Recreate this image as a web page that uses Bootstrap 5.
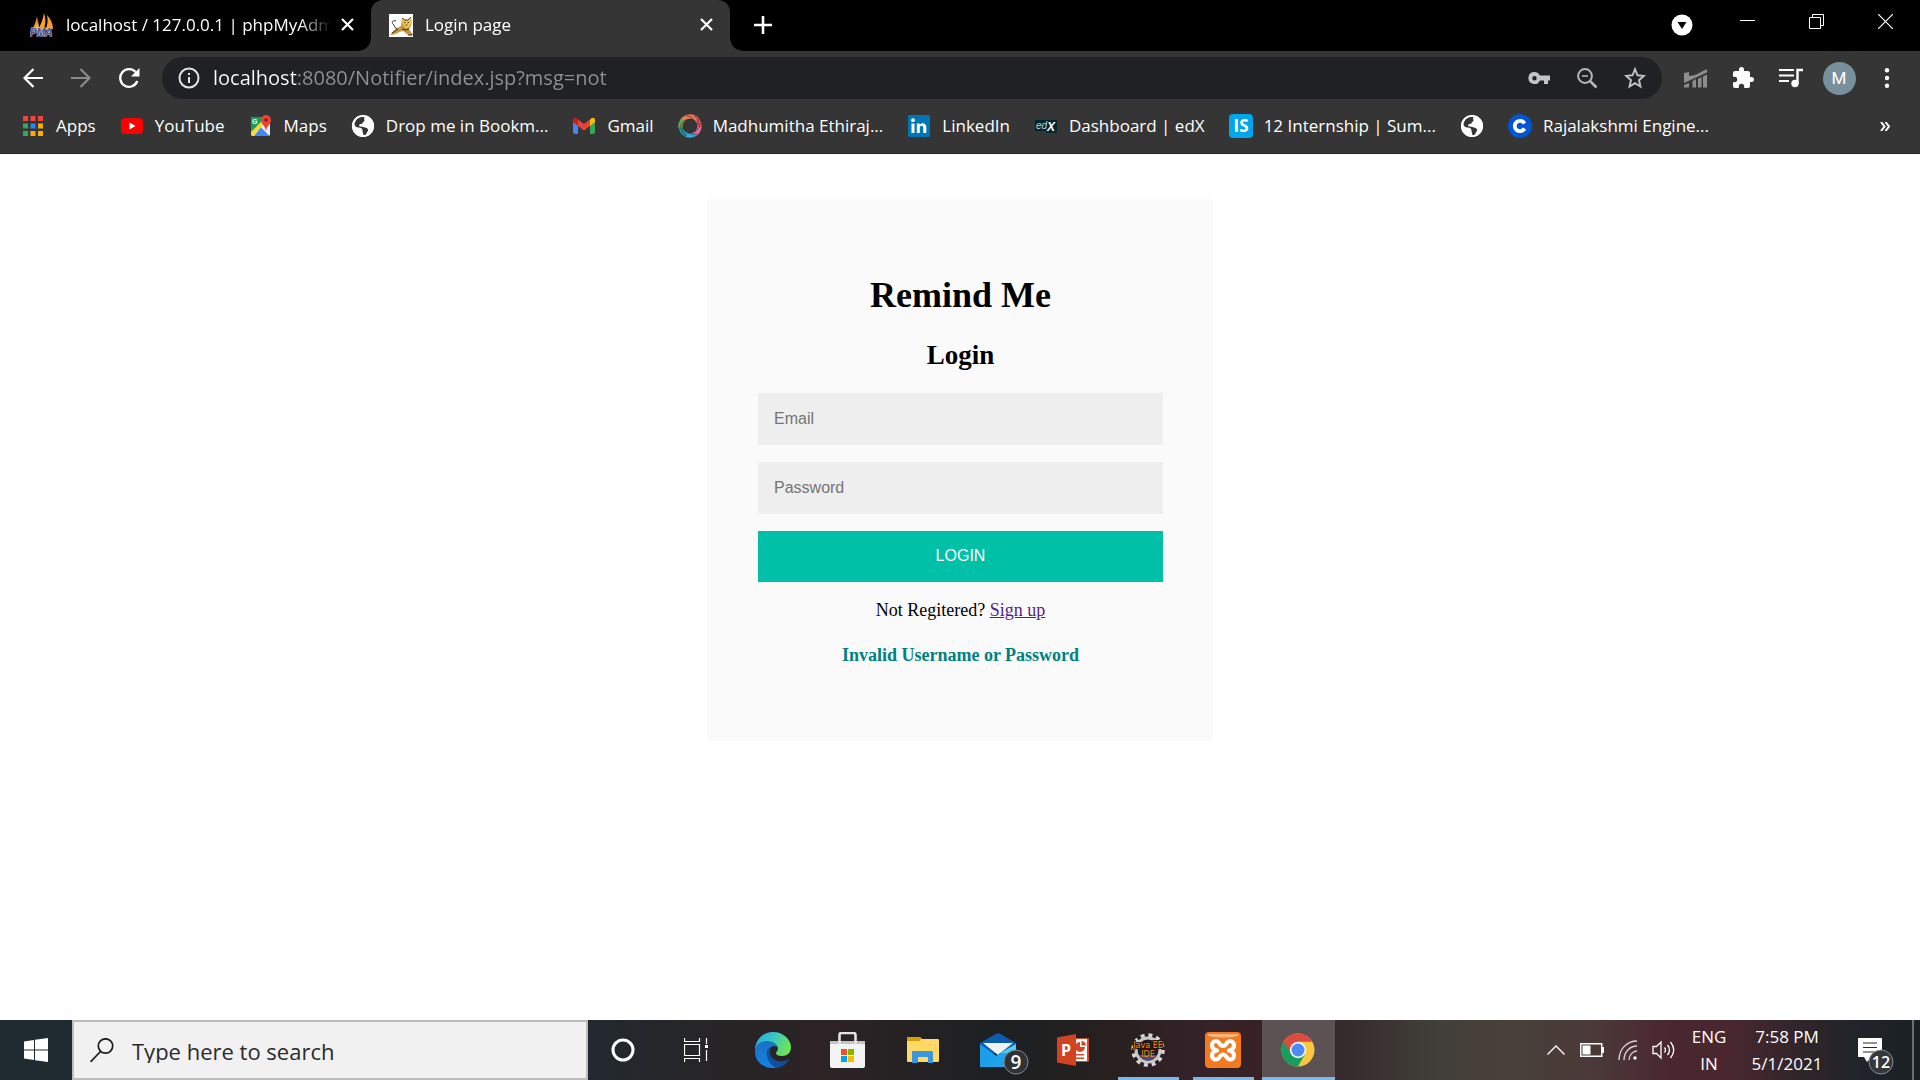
<!DOCTYPE html>
<html lang="en">
<head>
<meta charset="utf-8">
<meta name="viewport" content="width=device-width, initial-scale=1">
<title>Login page</title>
<link href="https://cdn.jsdelivr.net/npm/bootstrap@5.3.0/dist/css/bootstrap.min.css" rel="stylesheet">
<style>
  body { font-family: "Open Sans", "Noto Sans", sans-serif; font-size: 17px; line-height: 24px; background: #fff; }
  button { background: none; border: 0; padding: 0; color: inherit; }
  svg { display: block; flex: none; }

  /* tab strip */
  .tab-strip { background: #000; color: #fff; height: 51px; padding-left: 12px; }
  .browser-tab { flex: 0 1 359px; min-width: 0; padding: 0 12px 2px 18px; position: relative; }
  .browser-tab.current { background: #353535; border-radius: 12px 12px 0 0; }
  .browser-tab.current::before, .browser-tab.current::after { content: ""; position: absolute; bottom: 0; width: 12px; height: 12px; }
  .browser-tab.current::before { right: 100%; background: radial-gradient(circle at 0 0, #000 11px, #353535 12px); }
  .browser-tab.current::after { left: 100%; background: radial-gradient(circle at 100% 0, #000 11px, #353535 12px); }
  .tab-title { margin: 0 5px 0 12px; overflow: hidden; white-space: nowrap; -webkit-mask-image: linear-gradient(90deg, #000 calc(100% - 32px), transparent); mask-image: linear-gradient(90deg, #000 calc(100% - 32px), transparent); }
  .tab-close { width: 24px; height: 24px; }
  .new-tab { width: 36px; margin-left: 15px; padding-bottom: 2px; }
  .win-btn { width: 69px; height: 42px; }
  .tab-search { width: 63px; height: 51px; padding-bottom: 2px; }

  /* toolbar */
  .tool-row { background: #353535; color: #fff; height: 54px; padding: 0 9px; }
  .tool-btn { width: 48px; height: 42px; }
  .omnibox { background: #202125; border-radius: 21px; height: 42px; margin: 0 9px; padding: 0 3px 0 15px; gap: 12px; color: #bdbec0; }
  .omnibox .tool-btn { margin-left: -12px; }
  .omnibox .tool-group { gap: 12px; padding-left: 12px; }
  .url-field { border: 0; outline: 0; padding: 0; min-width: 0; height: 36px; font-size: 20px; line-height: 36px; color: transparent; caret-color: #fff;
    background: linear-gradient(90deg, #fff 84px, #8f9296 84px); -webkit-background-clip: text; background-clip: text; }
  .avatar { width: 33px; height: 33px; border-radius: 50%; background: #78909c; font-family: Roboto, sans-serif; font-size: 17px; }

  /* bookmarks */
  .mark-row { background: #353535; height: 49px; padding: 0 11px 6px 21px; gap: 24px; border-bottom: 1px solid #232323; }
  .mark-row a { color: #fff; text-decoration: none; gap: 11px; white-space: nowrap; }
  .more-marks { width: 48px; color: #fff; }

  /* login card */
  .login-card { width: 100%; max-width: 506px; margin-top: 45px; padding: 76px 50px 76px 51px; background: #fafafa; color: #000; font-family: "Liberation Serif", serif; font-size: 18px; line-height: 20px; }
  .login-card h1 { font-size: 36px; line-height: 40px; font-weight: 700; margin: 0 0 25px; }
  .login-card h2 { font-size: 27px; line-height: 30px; font-weight: 700; margin: 0 0 23px; }
  .login-card .form-control, .login-card .btn { font-family: "Liberation Sans", sans-serif; font-size: 16px; line-height: 20px; border: 0; border-radius: 0; }
  .login-card .form-control { background: #eee; padding: 16px; margin-bottom: 17px; }
  .login-card .form-control::placeholder { color: #757575; }
  .login-card .btn { background: #00c0a7; color: #fff; padding: 15px 16px 16px; }
  .login-card p { margin: 18px 0 25px; }
  .login-card a { color: #551a8b; }
  .login-card .alert-line { color: #008080; margin-bottom: 0; }

  /* task bar */
  .task-row { height: 60px; color: #fff; background: linear-gradient(90deg, #1f2b31 0, #23292e 31%, #272426 38%, #2c2325 43%, #1d2022 52%, #27201f 58%, #36222a 63%, #382123 66%, #352b2c 70%, #42403a 75%, #494039 79%, #4b3939 83%, #4a2730 87%, #4a272f 90%, #2e2529 94%, #20242a 97%, #1b2023 100%); }
  .start-btn { width: 72px; }
  .search-box { flex: 0 1 516px; min-width: 0; background: #f1f1f1; border: 2px solid #bebebe; padding-left: 16px; gap: 18px; }
  .search-box input { border: 0; outline: 0; background: none; padding: 2px 0 0; min-width: 0; font-size: 22px; color: #2b2b2b; }
  .search-box input::placeholder { color: #2b2b2b; opacity: 1; }
  .task-btn { width: 75px; border-bottom: 3px solid transparent; padding: 3px 2px 0 0; }
  .task-group { margin-left: -2px; }
  .task-btn.running { border-image: linear-gradient(90deg, transparent 7px, #76b9ed 7px, #76b9ed 68px, transparent 68px) 0 0 3; }
  .task-btn.focused { width: 73px; margin: 0 1px; background: #5c5253; border-bottom-color: #76b9ed; }
  .tray-btn { width: 36px; }
  .tray-text { font-size: 17px; line-height: 27px; text-align: center; }
  .lang-btn { width: 54px; }
  .clock-btn { width: 102px; }
  .note-btn { width: 74px; padding-left: 20px; }
  .desk-btn { width: 8px; border-left: 2px solid #6d7073; }
</style>
<script src="https://cdn.jsdelivr.net/npm/bootstrap@5.3.0/dist/js/bootstrap.bundle.min.js"></script>
</head>
<body class="d-flex flex-column min-vh-100">
<header>
  <div class="tab-strip d-flex">
    <div class="browser-tab d-flex align-items-center">
      <svg width="24" height="24" viewBox="0 0 24 24"><path d="M7 3C6 9 4 14 1 18l6-1zM14 0c2 6 2 12-1 17l-6 1C11 12 13 6 14 0zM17 2c4 4 6 9 6 14l-8 1c3-5 3-10 2-15z" fill="#f89c2b"/><path d="M7 3c1 5 0 10-1 14l3-1c0-4-1-9-2-13z" fill="#e9b36f"/><text x="0" y="23" font-family="Liberation Sans" font-size="10" font-weight="700" font-style="italic" fill="#4f4f91" stroke="#c8c8dc" stroke-width="1" paint-order="stroke">PMA</text></svg>
      <span class="tab-title flex-grow-1">localhost / 127.0.0.1 | phpMyAdmin</span>
      <button class="tab-close d-flex align-items-center justify-content-center" aria-label="Close tab"><svg width="13" height="13" viewBox="0 0 13 13"><path d="M1 1l11 11M12 1L1 12" stroke="#fff" stroke-width="2.2"/></svg></button>
    </div>
    <div class="browser-tab current d-flex align-items-center">
      <svg width="24" height="24" viewBox="0 0 24 24"><path d="M0 1h24v23H0z" fill="#fff"/><path d="M1 22C4 18 7 15 12 13l1-8 3 2h3l3-3c1 5 1 9-2 12l4 6h-5l-5-4c-4 0-6 4-13 4z" fill="#c9963a"/><path d="M13 5l3 3h3l3-4c1 5 0 8-2 10l-3 1c-3-2-4-5-4-10z" fill="#e9c65a"/><path d="M15 9l1.500 1M20 9l-1.500 1M16.500 12h2M13 5l3 2h3l3-3" fill="none" stroke="#6b4a16" stroke-width="1"/><path d="M3 20l6-4M8 16c-3-1-2-4-4-5-2-2 0-4 3-3M13 16l4 1 3-1M19 22h4v-1" fill="none" stroke="#333" stroke-width="1"/></svg>
      <span class="tab-title flex-grow-1">Login page</span>
      <button class="tab-close d-flex align-items-center justify-content-center" aria-label="Close tab"><svg width="13" height="13" viewBox="0 0 13 13"><path d="M1 1l11 11M12 1L1 12" stroke="#fff" stroke-width="2.2"/></svg></button>
    </div>
    <button class="new-tab d-flex align-items-center justify-content-center" aria-label="New tab"><svg width="18" height="18" viewBox="0 0 18 18"><path d="M9 0v18M0 9h18" stroke="#fff" stroke-width="2.6"/></svg></button>
    <div class="d-flex ms-auto">
      <button class="tab-search d-flex align-items-center justify-content-center" aria-label="Search tabs"><svg width="22" height="22" viewBox="0 0 22 22"><circle cx="11" cy="11" r="10.5" fill="#fff"/><path d="M6.500 8h9L11 15z" fill="#000"/></svg></button>
      <button class="win-btn d-flex align-items-center justify-content-center" aria-label="Minimize"><svg width="15" height="15" viewBox="0 0 15 15"><path d="M0 6.500h15" stroke="#fff"/></svg></button>
      <button class="win-btn d-flex align-items-center justify-content-center" aria-label="Restore"><svg width="15" height="15" viewBox="0 0 15 15"><path d="M.5 3.500h11v11h-11zM3.500 3.500v-3h11v11h-3" fill="none" stroke="#fff"/></svg></button>
      <button class="win-btn d-flex align-items-center justify-content-center" aria-label="Close"><svg width="15" height="15" viewBox="0 0 15 15"><path d="M0 0l15 15M15 0L0 15" stroke="#fff" stroke-width="1.200"/></svg></button>
    </div>
  </div>

  <div class="tool-row d-flex align-items-center">
    <button class="tool-btn d-flex align-items-center justify-content-center" aria-label="Back"><svg width="20" height="20" viewBox="0 0 20 20"><path d="M20 10H2M10.500 1L1.500 10l9 9" fill="none" stroke="#fff" stroke-width="2.200"/></svg></button>
    <button class="tool-btn d-flex align-items-center justify-content-center" aria-label="Forward"><svg width="20" height="20" viewBox="0 0 20 20"><path d="M0 10h18M9.500 1l9 9-9 9" fill="none" stroke="#8b8b8b" stroke-width="2.200"/></svg></button>
    <button class="tool-btn d-flex align-items-center justify-content-center" aria-label="Reload"><svg width="22" height="20" viewBox="0 0 22 20"><path d="M19.300 13A8.800 8.800 0 1 1 17.500 4" fill="none" stroke="#fff" stroke-width="2.300"/><path d="M21.500 0v8.500H13z" fill="#fff"/></svg></button>
    <div class="omnibox flex-grow-1 d-flex align-items-center">
      <svg width="24" height="24" viewBox="0 0 24 24"><circle cx="12" cy="12" r="9.500" fill="none" stroke="#e4e5e7" stroke-width="2"/><path d="M11 7h2v2h-2zM11 11h2v6h-2z" fill="#e4e5e7"/></svg>
      <input class="url-field flex-grow-1" type="text" aria-label="Address" value="localhost:8080/Notifier/index.jsp?msg=not">
      <div class="tool-group d-flex">
        <button class="tool-btn d-flex align-items-center justify-content-center" aria-label="Passwords"><svg width="22" height="14" viewBox="0 0 22 14"><path d="M6.500 1a6 6 0 1 0 5.400 8.500H16V13h4V9.500h2v-5H11.900A6 6 0 0 0 6.500 1zm0 4a2.200 2.200 0 1 1 0 4.400 2.200 2.200 0 0 1 0-4.400z" fill="#c3c4c6"/></svg></button>
        <button class="tool-btn d-flex align-items-center justify-content-center" aria-label="Zoom"><svg width="22" height="22" viewBox="0 0 22 22"><circle cx="9" cy="9" r="6.900" fill="none" stroke="#b4b5b7" stroke-width="2"/><path d="M14 14l6.500 6.500" stroke="#b4b5b7" stroke-width="2.600"/><path d="M6 9h6" stroke="#b4b5b7" stroke-width="1.600"/></svg></button>
        <button class="tool-btn d-flex align-items-center justify-content-center" aria-label="Bookmark"><svg width="22" height="22" viewBox="0 0 22 22"><path d="M11 2.200l2.500 6.100 6.400.6-4.900 4.300 1.500 6.400L11 16.200l-5.500 3.400L7 13.200 2.100 8.900l6.400-.6z" fill="none" stroke="#c3c4c6" stroke-width="1.900"/></svg></button>
      </div>
    </div>
    <button class="tool-btn d-flex align-items-center justify-content-center" aria-label="Analytics extension"><svg width="23" height="20" viewBox="0 0 23 20"><path d="M0 17l5-2v4.500H0zM8.500 13l3.500-2v8.500H8.500zM14 11l3.500-2v10.500H14zM19 8.500l4-2v13h-4z" fill="#8d8d8d"/><path d="M0 5l5-1v4l6-1 12-6v3.500L0 15z" fill="#8d8d8d"/></svg></button>
    <button class="tool-btn d-flex align-items-center justify-content-center" aria-label="Extensions"><svg width="24" height="24" viewBox="0 0 24 24"><path d="M20.500 11H19V7a2 2 0 0 0-2-2h-4V3.500a2.500 2.500 0 0 0-5 0V5H4a2 2 0 0 0-2 2v3.800h1.500a2.700 2.700 0 0 1 0 5.400H2V20a2 2 0 0 0 2 2h3.800v-1.500a2.700 2.700 0 0 1 5.400 0V22H17a2 2 0 0 0 2-2v-4h1.500a2.500 2.500 0 0 0 0-5z" fill="#fff"/></svg></button>
    <button class="tool-btn d-flex align-items-center justify-content-center" aria-label="Media controls"><svg width="24" height="20" viewBox="0 0 24 20"><path d="M0 2h15M0 7.500h15M0 13h10" stroke="#fff" stroke-width="2.200"/><circle cx="16" cy="15.500" r="3.700" fill="#fff"/><path d="M18.500 15V2H24" fill="none" stroke="#fff" stroke-width="2.400"/></svg></button>
    <button class="tool-btn d-flex align-items-center justify-content-center" aria-label="Profile"><span class="avatar d-flex align-items-center justify-content-center">M</span></button>
    <button class="tool-btn d-flex align-items-center justify-content-center" aria-label="Menu"><svg width="6" height="20" viewBox="0 0 6 20"><g fill="#fff"><circle cx="3" cy="2.300" r="2.200"/><circle cx="3" cy="10" r="2.200"/><circle cx="3" cy="17.700" r="2.200"/></g></svg></button>
  </div>

  <nav class="mark-row d-flex align-items-center" aria-label="Bookmarks">
    <a href="#" class="d-flex align-items-center"><svg width="24" height="24" viewBox="0 0 24 24"><path d="M2 2h5v5H2zM9.500 2h5v5h-5zM17 2h5v5h-5z" fill="#f1453a"/><path d="M2 9.500h5v5H2zM2 17h5v5H2z" fill="#34a853"/><path d="M9.500 9.500h5v5h-5z" fill="#2684fc"/><path d="M17 9.500h5v5h-5zM9.500 17h5v5h-5zM17 17h5v5h-5z" fill="#fbab06"/></svg>Apps</a>
    <a href="#" class="d-flex align-items-center"><svg width="24" height="24" viewBox="0 0 24 24"><rect x="1" y="4" width="22" height="16" rx="4" fill="#f00"/><path d="M9.500 8.500v7l6-3.500z" fill="#fff"/></svg>YouTube</a>
    <a href="#" class="d-flex align-items-center"><svg width="24" height="24" viewBox="0 0 24 24"><rect x="2" y="3" width="19" height="19" rx="2" fill="#e9ebee"/><path d="M2 18V5a2 2 0 0 1 2-2h14L6 15z" fill="#1f9d57"/><path d="M2 18L16 4l3 3L4 22l-2-1z" fill="#fdd835"/><path d="M12 12l9 9V10z" fill="#e9ebee"/><path d="M12 13.500l8.500 8.500H5z" fill="#4285f4"/><text x="3" y="10" font-family="Liberation Sans" font-size="7" font-weight="700" fill="#fff">G</text><path d="M17 1a5 5 0 0 0-5 5c0 4 4 5 5 11 1-6 5-7 5-11a5 5 0 0 0-5-5z" fill="#ea4335"/><circle cx="17" cy="6" r="1.800" fill="#8d2019"/></svg>Maps</a>
    <a href="#" class="d-flex align-items-center"><svg width="24" height="24" viewBox="0 0 24 24"><circle cx="12" cy="12" r="10.800" fill="#fff"/><path d="M3.500 9.500c0 3 2 4 4.500 4 2 0 3.500 1 3.500 3s1 3.500 1 5c3 0 3-3 4-4s1-2.500-1-3.500-4-1.500-6-1.500c-1 0-2-1-1-2s3 0 3-1.500 2-1 2-2.500-1-2 0-3.500c-4-1-8 1-9 4" fill="#353535"/><circle cx="12" cy="12" r="10.200" fill="none" stroke="#fff" stroke-width="1.800"/></svg>Drop me in Bookm...</a>
    <a href="#" class="d-flex align-items-center"><svg width="24" height="24" viewBox="0 0 24 24"><path d="M1 7v11a2 2 0 0 0 2 2h3V10z" fill="#4285f4"/><path d="M18 10v10h3a2 2 0 0 0 2-2V7z" fill="#34a853"/><path d="M18 6v6l5-4V6c0-2-2-3-4-1.500z" fill="#fbbc04"/><path d="M6 5.500l6 4.500 6-4.500V12l-6 4.500L6 12z" fill="#ea4335"/><path d="M1 6v2l5 4V5.500L5 4.500C3 3 1 4 1 6z" fill="#c5221f"/></svg>Gmail</a>
    <a href="#" class="d-flex align-items-center"><svg width="24" height="24" viewBox="0 0 24 24"><g fill="none" stroke-width="4.200"><path d="M4 7a9.500 9.500 0 0 1 7-4.500" stroke="#f47b4a"/><path d="M10 2.700a9.500 9.500 0 0 1 9.500 3.500" stroke="#f2704d"/><path d="M18.600 5.200a9.500 9.500 0 0 1 2.600 9" stroke="#e84f5e"/><path d="M21.400 13a9.500 9.500 0 0 1-5 7.400" stroke="#e66a9c"/><path d="M17.200 20a9.500 9.500 0 0 1-9.500.6" stroke="#35a9dd"/><path d="M8.500 20.800A9.500 9.500 0 0 1 2.600 13" stroke="#1a95a5"/><path d="M2.500 14A9.500 9.500 0 0 1 5.500 5.500" stroke="#6aa84a"/></g><path d="M8 2c4 0 6 1 8 5M16 2c4 2 5 5 4 9M22 9c0 4-2 7-6 9M19 20c-4 1-7 0-10-3M9 22c-4-2-5-5-5-9M2 15c0-4 2-7 6-9" fill="none" stroke="#353535" stroke-width=".7"/></svg>Madhumitha Ethiraj...</a>
    <a href="#" class="d-flex align-items-center"><svg width="24" height="24" viewBox="0 0 24 24"><rect x="1" y="1" width="22" height="22" rx="1.500" fill="#0077b5"/><path d="M4.500 9.500h3V19h-3zM9.800 9.500h2.900v1.400c1.600-2.700 6.600-2.200 6.600 2.400V19h-3v-5c0-3-3.500-2.800-3.500 0v5h-3z" fill="#fff"/><circle cx="6" cy="6.200" r="1.900" fill="#fff"/></svg>LinkedIn</a>
    <a href="#" class="d-flex align-items-center"><svg width="24" height="24" viewBox="0 0 24 24"><path d="M1 6h22v13H12v-2H1z" fill="#02262b"/><text x="2" y="15" font-family="Liberation Sans" font-size="10" font-style="italic" fill="#c9d2d3">ed</text><text x="13" y="17" font-family="Liberation Sans" font-size="12" font-weight="700" font-style="italic" fill="#fff">X</text></svg>Dashboard | edX</a>
    <a href="#" class="d-flex align-items-center"><svg width="24" height="24" viewBox="0 0 24 24"><rect width="24" height="24" rx="4" fill="#00a5ec"/><text x="12" y="18" text-anchor="middle" font-family="Open Sans" font-size="17" font-weight="700" fill="#fff">IS</text></svg>12 Internship | Sum...</a>
    <a href="#" aria-label="Bookmark"><svg width="24" height="24" viewBox="0 0 24 24"><circle cx="12" cy="12" r="10.800" fill="#fff"/><path d="M3.500 9.500c0 3 2 4 4.500 4 2 0 3.500 1 3.500 3s1 3.500 1 5c3 0 3-3 4-4s1-2.500-1-3.500-4-1.500-6-1.500c-1 0-2-1-1-2s3 0 3-1.500 2-1 2-2.500-1-2 0-3.500c-4-1-8 1-9 4" fill="#353535"/><circle cx="12" cy="12" r="10.200" fill="none" stroke="#fff" stroke-width="1.800"/></svg></a>
    <a href="#" class="d-flex align-items-center"><svg width="24" height="24" viewBox="0 0 24 24"><circle cx="12" cy="12" r="12" fill="#0056d2"/><path d="M16.500 9.500A5.200 5.200 0 1 0 16.500 14.500" fill="none" stroke="#fff" stroke-width="3.800"/></svg>Rajalakshmi Engine...</a>
    <button class="more-marks ms-auto" aria-label="More bookmarks"><svg class="mx-auto" width="10" height="9" viewBox="0 0 10 9"><path d="M1 0l3.500 4.500L1 9M5.500 0L9 4.500 5.500 9" fill="none" stroke="#fff" stroke-width="2"/></svg></button>
  </nav>
</header>

<main class="flex-grow-1 d-flex justify-content-center align-items-start">
  <form class="login-card text-center" onsubmit="return false">
    <h1>Remind Me</h1>
    <h2>Login</h2>
    <input class="form-control" type="email" placeholder="Email" aria-label="Email">
    <input class="form-control" type="password" placeholder="Password" aria-label="Password">
    <button class="btn d-block w-100" type="submit">LOGIN</button>
    <p>Not Regitered? <a href="#">Sign up</a></p>
    <p class="alert-line fw-bold">Invalid Username or Password</p>
  </form>
</main>

<footer class="task-row d-flex">
  <button class="start-btn d-flex align-items-center justify-content-center" aria-label="Start"><svg width="24" height="24" viewBox="0 0 24 24"><path d="M0 3.500L10 2v9.500H0zM11 1.800L24 0v11.500H11zM0 12.500h10V22L0 20.500zM11 12.500h13V24l-13-1.800z" fill="#fff"/></svg></button>
  <label class="search-box d-flex align-items-center"><svg width="24" height="24" viewBox="0 0 24 24"><circle cx="15.500" cy="8" r="7.200" fill="none" stroke="#1c1c1c" stroke-width="1.700"/><path d="M10.500 13.500L.5 24" stroke="#1c1c1c" stroke-width="1.700"/></svg><input class="flex-grow-1" type="text" placeholder="Type here to search" aria-label="Search"></label>
  <div class="task-group d-flex">
    <button class="task-btn d-flex align-items-center justify-content-center" aria-label="Cortana"><svg width="24" height="24" viewBox="0 0 24 24"><circle cx="12" cy="12" r="10" fill="none" stroke="#fff" stroke-width="3"/></svg></button>
    <button class="task-btn d-flex align-items-center justify-content-center" aria-label="Task view"><svg width="28" height="24" viewBox="0 0 28 24"><path d="M.5 0v3.500h15V0M.5 6.500h15v11H.5zM.5 24v-3.500h15V24M22.500 0v6M22.500 12v11" fill="none" stroke="#fff" stroke-width="1.200"/><path d="M21 7h3v3h-3z" fill="#fff"/></svg></button>
    <button class="task-btn d-flex align-items-center justify-content-center" aria-label="Edge"><svg width="36" height="36" viewBox="0 0 36 36"><defs><linearGradient id="eg1" x1="0" y1="0" x2="1" y2=".4"><stop offset="0" stop-color="#1fa8e8"/><stop offset=".5" stop-color="#36c5c4"/><stop offset="1" stop-color="#6be35a"/></linearGradient><linearGradient id="eg2" x1="0" y1="0" x2="0" y2="1"><stop offset="0" stop-color="#1b6fc4"/><stop offset="1" stop-color="#1184e4"/></linearGradient></defs><path d="M0 17C1 7 8 0 18 0c11 0 18 8 18 15 0 6-4 9-9 9-4 0-6-1-6-3 0-1 2-2 2-5C21 10 8 8 0 17z" fill="url(#eg1)"/><path d="M0 18c1-6 6-9 12-9 7 0 11 4 11 8 0-2-2-3-4-3-3 0-6 4-6 9 0 7 5 12 10 13C10 38-1 30 0 18z" fill="url(#eg2)"/><path d="M16 15c-3 1-5 4-4 9 1 6 6 11 10 12 5-1 9-4 12-8 0-1-1-1-2 0-8 4-17-1-17-8 0-2 0-4 1-5z" fill="#0f4f9e"/></svg></button>
    <button class="task-btn d-flex align-items-center justify-content-center" aria-label="Store"><svg width="36" height="36" viewBox="0 0 36 36"><path d="M0 9h35v25a2 2 0 0 1-2 2H2a2 2 0 0 1-2-2z" fill="#f3f3f3"/><path d="M0 9h35v3H0z" fill="#c4c4c6"/><path d="M9.500 12V3a2 2 0 0 1 2-2h12a2 2 0 0 1 2 2v9" fill="none" stroke="#e3e3e3" stroke-width="2.600"/><path d="M11 17h6v6h-6z" fill="#f25022"/><path d="M18 17h6v6h-6z" fill="#7fba00"/><path d="M11 24h6v6h-6z" fill="#00a4ef"/><path d="M18 24h6v6h-6z" fill="#ffb900"/></svg></button>
    <button class="task-btn d-flex align-items-center justify-content-center" aria-label="File Explorer"><svg width="32" height="28" viewBox="0 0 32 28"><path d="M0 2a1 1 0 0 1 1-1h12l2 2h16a1 1 0 0 1 1 1v21a1 1 0 0 1-1 1H1a1 1 0 0 1-1-1z" fill="#ffd866"/><path d="M0 2a1 1 0 0 1 1-1h12l1 2-1 2H0z" fill="#dc9b08"/><path d="M5 27V16a1 1 0 0 1 1-1h19a1 1 0 0 1 1 1v11h-5v-6H11v6z" fill="#3a96dd"/></svg></button>
    <button class="task-btn d-flex align-items-center justify-content-center" aria-label="Mail, 9 unread"><svg class="overflow-visible" width="36" height="34" viewBox="0 0 36 34"><path d="M0 10L16 .8a4 4 0 0 1 4 0L36 10v10H0z" fill="#0b5cad"/><path d="M3 10h30L18 22z" fill="#f2f2f2"/><path d="M0 11l18 13v10H0z" fill="#1b9fe8"/><path d="M36 11v23H2l18-14z" fill="#1ea2ec"/><path d="M36 11v9H21z" fill="#4dcdf7"/><circle cx="36" cy="29" r="12" fill="#2f3335" stroke="#85898b"/><text x="36" y="36" text-anchor="middle" font-family="Open Sans" font-size="19" font-weight="600" fill="#fff">9</text></svg></button>
    <button class="task-btn d-flex align-items-center justify-content-center" aria-label="PowerPoint"><svg width="32" height="32" viewBox="0 0 32 32"><path d="M16 4h15a1 1 0 0 1 1 1v22a1 1 0 0 1-1 1H16z" fill="#d24726"/><path d="M18 5h12v22H18z" fill="#fff"/><path d="M23 8v5h5a5 5 0 1 1-5-5z" fill="#d24726"/><path d="M24.500 7a4.500 4.500 0 0 1 4.500 4.500h-4.500zM19 20h8v1.500h-8zM19 23.500h8V25h-8z" fill="#d24726"/><path d="M0 3.500L19 0v32L0 28.500z" fill="#d04423"/><text x="4" y="22" font-family="Open Sans" font-size="16" font-weight="700" fill="#fff">P</text></svg></button>
    <button class="task-btn running d-flex align-items-center justify-content-center" aria-label="Java EE IDE"><svg width="34" height="34" viewBox="0 0 34 34"><circle cx="17" cy="17" r="14.800" fill="none" stroke="#d5d5d5" stroke-width="4" stroke-dasharray="3.900 3.850"/><circle cx="17" cy="17" r="12" fill="#1a1a2c" stroke="#c9c9c9" stroke-width="3"/><path d="M8 22h18a10 10 0 0 1-18 0z" fill="#4f4a80"/><text x="17" y="15" text-anchor="middle" font-family="DejaVu Sans" font-size="8" fill="#f58a1f" stroke="#2c1608" stroke-width="2" paint-order="stroke">Java EE</text><text x="17" y="24" text-anchor="middle" font-family="DejaVu Sans" font-size="8" fill="#f58a1f">IDE</text></svg></button>
    <button class="task-btn running d-flex align-items-center justify-content-center" aria-label="XAMPP"><svg width="36" height="36" viewBox="0 0 36 36"><rect width="36" height="36" rx="4" fill="#f47a20"/><path d="M3 2h30v2q-15 3-30 0z" fill="#fbb57c"/><path d="M12 18.500C5 17 6 9 11 9c4 0 3 5 7 5s3-5 7-5c5 0 6 8-1 9.500 7 1.500 6 9 1 9-4 0-3-5-7-5s-3 5-7 5c-5 0-6-7.500 1-9z" fill="none" stroke="#fff" stroke-width="4.200" stroke-linejoin="round"/></svg></button>
    <button class="task-btn focused d-flex align-items-center justify-content-center" aria-label="Chrome"><svg width="34" height="34" viewBox="0 0 34 34"><circle cx="17" cy="17" r="16.500" fill="#fbc73f"/><path d="M2.700 8.750A16.500 16.500 0 0 0 17 33.500L24.100 21.100 17 17z" fill="#159f5c"/><path d="M2.700 8.750A16.500 16.500 0 0 1 31.300 8.750H17L9.900 21.100z" fill="#dd4b3e"/><circle cx="17" cy="17" r="8.200" fill="#f3f3f3"/><circle cx="17" cy="17" r="6.500" fill="#4c8bf5"/></svg></button>
  </div>
  <div class="d-flex ms-auto">
    <button class="tray-btn d-flex align-items-center justify-content-center" aria-label="Hidden icons"><svg width="18" height="10" viewBox="0 0 18 10"><path d="M.5 9.500L9 1l8.500 8.500" fill="none" stroke="#fff" stroke-width="1.400"/></svg></button>
    <button class="tray-btn d-flex align-items-center justify-content-center" aria-label="Battery"><svg width="24" height="14" viewBox="0 0 24 14"><path d="M.75.75h21v12.500h-21z" fill="none" stroke="#fff" stroke-width="1.400"/><path d="M2.500 2.500h8v9h-8zM22 4h2v6h-2z" fill="#fff"/></svg></button>
    <button class="tray-btn d-flex align-items-center justify-content-center" aria-label="Network"><svg width="20" height="20" viewBox="0 0 20 20"><g fill="none" stroke="#d9d2d2" stroke-width="1.400"><path d="M1 20C1 9 9 1 19 1"/><path d="M6 20C6 12 12 6 19 6"/><path d="M11 20c0-5 4-9 8-9"/></g><circle cx="17" cy="18" r="1.700" fill="#fff"/></svg></button>
    <button class="tray-btn d-flex align-items-center justify-content-center" aria-label="Volume"><svg width="24" height="20" viewBox="0 0 24 20"><g fill="none" stroke="#fff" stroke-width="1.300"><path d="M1 6.500h3.500L9 2v16l-4.500-4.500H1z"/><path d="M12.500 7.500q2 2.500 0 5M15.500 5q4 5 0 10M18.500 2q6.500 8 0 16"/></g></svg></button>
    <button class="lang-btn tray-text">ENG<br>IN</button>
    <button class="clock-btn tray-text">7:58 PM<br>5/1/2021</button>
    <button class="note-btn d-flex align-items-center" aria-label="12 notifications"><svg class="overflow-visible" width="24" height="24" viewBox="0 0 24 24"><path d="M0 0h24v19H13l-4 5-3-5H0z" fill="#fff"/><path d="M5 5h14M5 9.500h14M5 14h14" stroke="#25282b" stroke-width="1.200"/><circle cx="23" cy="24" r="12" fill="#34383a" stroke="#8b8e90"/><text x="23" y="30" text-anchor="middle" font-family="Open Sans" font-size="16" font-weight="600" fill="#fff">12</text></svg></button>
    <button class="desk-btn" aria-label="Show desktop"></button>
  </div>
</footer>
</body>
</html>
